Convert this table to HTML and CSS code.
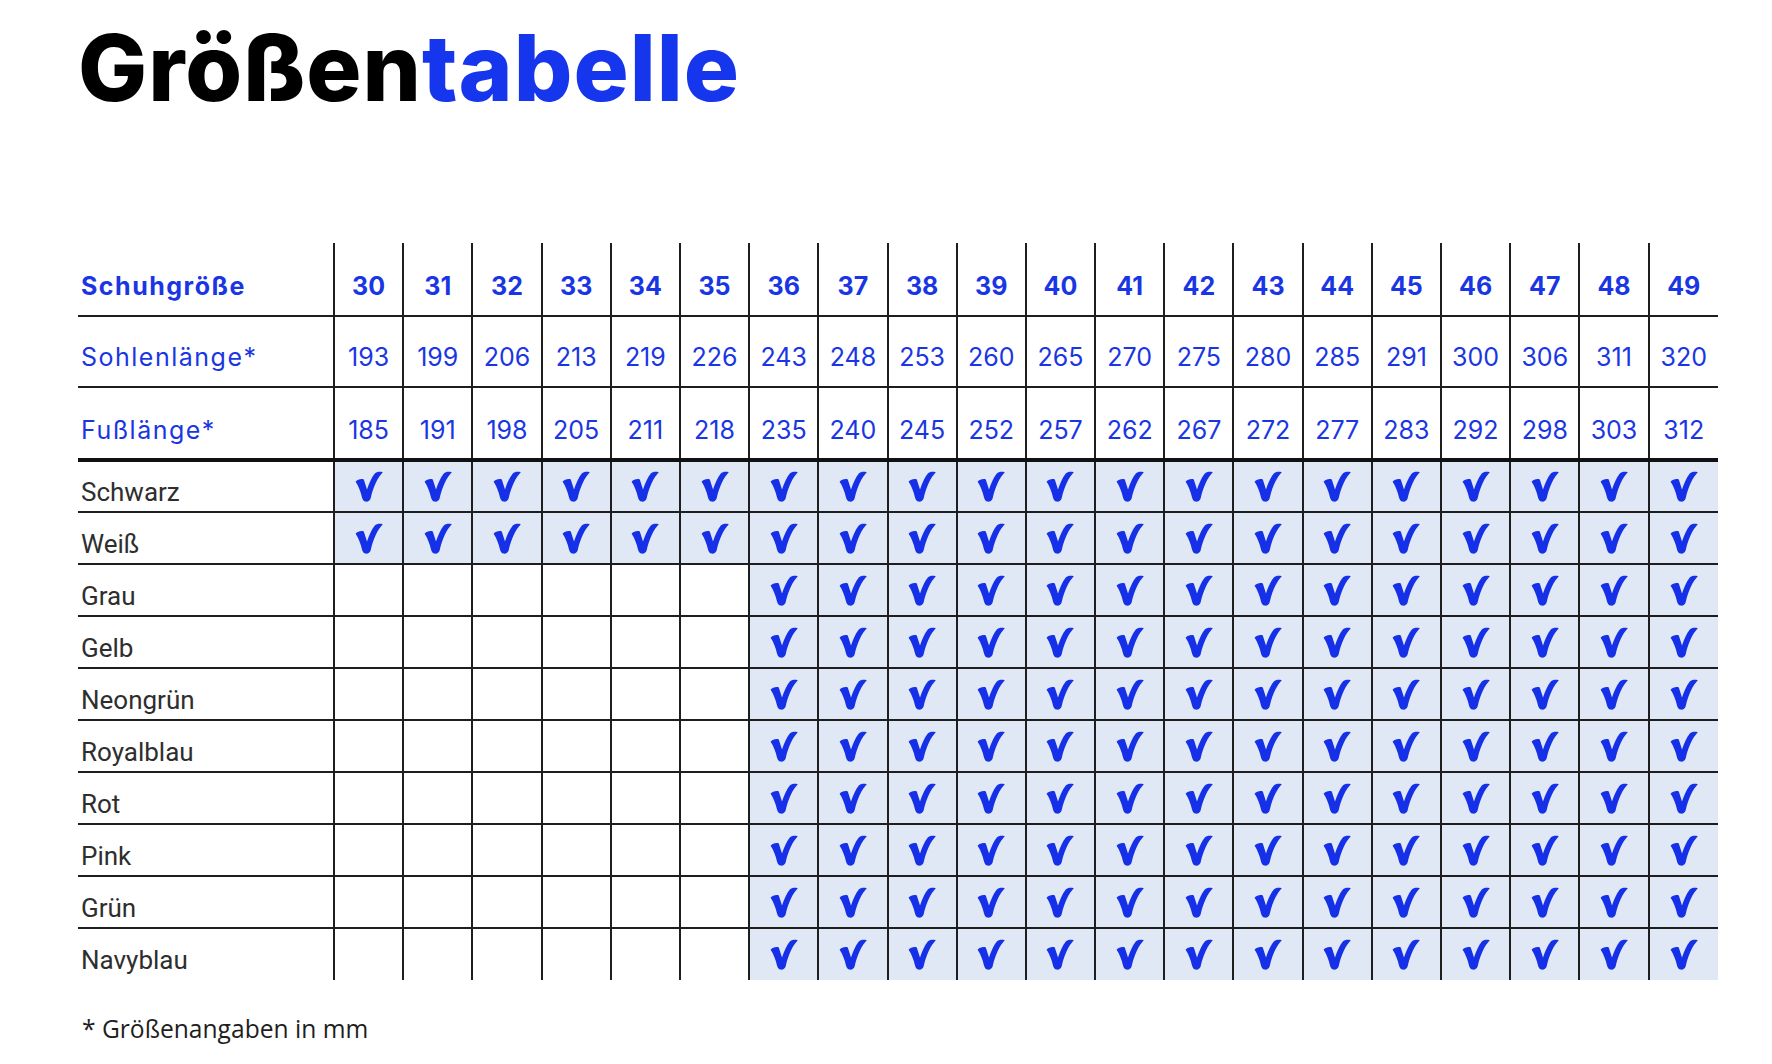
FILE: index.html
```html
<!DOCTYPE html>
<html lang="de">
<head>
<meta charset="utf-8">
<title>Größentabelle</title>
<link rel="stylesheet" href="styles.css">
</head>
<body>
<svg class="defs" width="0" height="0" aria-hidden="true">
  <defs>
    <symbol id="ck" viewBox="0 0 28 31">
      <path d="M0.6,10.8 C2.4,8.4 6.4,7.4 8.8,8.4 L12,18.5 C14,12 16.6,6.5 19.8,2.4 C21.6,0.6 25,0.3 27.8,1.2 C22.8,6.5 18.4,15 15.6,27.6 C15,30 12.6,31 10.6,30.6 C8.6,30.2 7.6,28.4 7,26.4 C5.6,20.6 3.4,14.8 0.6,10.8 Z"/>
    </symbol>
  </defs>
</svg>
<main class="page">
  <h1 class="title">Größen<span class="accent">tabelle</span></h1>
  <table class="sizes">
    <colgroup><col class="c-label"><col span="20"></colgroup>
    <tr class="r-size">
      <th class="lh">Schuhgröße</th>
      <th>30</th><th>31</th><th>32</th><th>33</th><th>34</th><th>35</th><th>36</th><th>37</th><th>38</th><th>39</th>
      <th>40</th><th>41</th><th>42</th><th>43</th><th>44</th><th>45</th><th>46</th><th>47</th><th>48</th><th>49</th>
    </tr>
    <tr class="r-sole">
      <th class="lh">Sohlenlänge*</th>
      <td>193</td><td>199</td><td>206</td><td>213</td><td>219</td><td>226</td><td>243</td><td>248</td><td>253</td><td>260</td>
      <td>265</td><td>270</td><td>275</td><td>280</td><td>285</td><td>291</td><td>300</td><td>306</td><td>311</td><td>320</td>
    </tr>
    <tr class="r-foot">
      <th class="lh">Fußlänge*</th>
      <td>185</td><td>191</td><td>198</td><td>205</td><td>211</td><td>218</td><td>235</td><td>240</td><td>245</td><td>252</td>
      <td>257</td><td>262</td><td>267</td><td>272</td><td>277</td><td>283</td><td>292</td><td>298</td><td>303</td><td>312</td>
    </tr>
    <tr class="r-color">
      <td class="cl">Schwarz</td>
      <td class="y"><svg class="ck"><use href="#ck"/></svg></td><td class="y"><svg class="ck"><use href="#ck"/></svg></td><td class="y"><svg class="ck"><use href="#ck"/></svg></td><td class="y"><svg class="ck"><use href="#ck"/></svg></td><td class="y"><svg class="ck"><use href="#ck"/></svg></td>
      <td class="y"><svg class="ck"><use href="#ck"/></svg></td><td class="y"><svg class="ck"><use href="#ck"/></svg></td><td class="y"><svg class="ck"><use href="#ck"/></svg></td><td class="y"><svg class="ck"><use href="#ck"/></svg></td><td class="y"><svg class="ck"><use href="#ck"/></svg></td>
      <td class="y"><svg class="ck"><use href="#ck"/></svg></td><td class="y"><svg class="ck"><use href="#ck"/></svg></td><td class="y"><svg class="ck"><use href="#ck"/></svg></td><td class="y"><svg class="ck"><use href="#ck"/></svg></td><td class="y"><svg class="ck"><use href="#ck"/></svg></td>
      <td class="y"><svg class="ck"><use href="#ck"/></svg></td><td class="y"><svg class="ck"><use href="#ck"/></svg></td><td class="y"><svg class="ck"><use href="#ck"/></svg></td><td class="y"><svg class="ck"><use href="#ck"/></svg></td><td class="y"><svg class="ck"><use href="#ck"/></svg></td>
    </tr>
    <tr class="r-color">
      <td class="cl">Weiß</td>
      <td class="y"><svg class="ck"><use href="#ck"/></svg></td><td class="y"><svg class="ck"><use href="#ck"/></svg></td><td class="y"><svg class="ck"><use href="#ck"/></svg></td><td class="y"><svg class="ck"><use href="#ck"/></svg></td><td class="y"><svg class="ck"><use href="#ck"/></svg></td>
      <td class="y"><svg class="ck"><use href="#ck"/></svg></td><td class="y"><svg class="ck"><use href="#ck"/></svg></td><td class="y"><svg class="ck"><use href="#ck"/></svg></td><td class="y"><svg class="ck"><use href="#ck"/></svg></td><td class="y"><svg class="ck"><use href="#ck"/></svg></td>
      <td class="y"><svg class="ck"><use href="#ck"/></svg></td><td class="y"><svg class="ck"><use href="#ck"/></svg></td><td class="y"><svg class="ck"><use href="#ck"/></svg></td><td class="y"><svg class="ck"><use href="#ck"/></svg></td><td class="y"><svg class="ck"><use href="#ck"/></svg></td>
      <td class="y"><svg class="ck"><use href="#ck"/></svg></td><td class="y"><svg class="ck"><use href="#ck"/></svg></td><td class="y"><svg class="ck"><use href="#ck"/></svg></td><td class="y"><svg class="ck"><use href="#ck"/></svg></td><td class="y"><svg class="ck"><use href="#ck"/></svg></td>
    </tr>
    <tr class="r-color">
      <td class="cl">Grau</td>
      <td></td><td></td><td></td><td></td><td></td><td></td>
      <td class="y"><svg class="ck"><use href="#ck"/></svg></td><td class="y"><svg class="ck"><use href="#ck"/></svg></td><td class="y"><svg class="ck"><use href="#ck"/></svg></td><td class="y"><svg class="ck"><use href="#ck"/></svg></td><td class="y"><svg class="ck"><use href="#ck"/></svg></td><td class="y"><svg class="ck"><use href="#ck"/></svg></td><td class="y"><svg class="ck"><use href="#ck"/></svg></td>
      <td class="y"><svg class="ck"><use href="#ck"/></svg></td><td class="y"><svg class="ck"><use href="#ck"/></svg></td><td class="y"><svg class="ck"><use href="#ck"/></svg></td><td class="y"><svg class="ck"><use href="#ck"/></svg></td><td class="y"><svg class="ck"><use href="#ck"/></svg></td><td class="y"><svg class="ck"><use href="#ck"/></svg></td><td class="y"><svg class="ck"><use href="#ck"/></svg></td>
    </tr>
    <tr class="r-color">
      <td class="cl">Gelb</td>
      <td></td><td></td><td></td><td></td><td></td><td></td>
      <td class="y"><svg class="ck"><use href="#ck"/></svg></td><td class="y"><svg class="ck"><use href="#ck"/></svg></td><td class="y"><svg class="ck"><use href="#ck"/></svg></td><td class="y"><svg class="ck"><use href="#ck"/></svg></td><td class="y"><svg class="ck"><use href="#ck"/></svg></td><td class="y"><svg class="ck"><use href="#ck"/></svg></td><td class="y"><svg class="ck"><use href="#ck"/></svg></td>
      <td class="y"><svg class="ck"><use href="#ck"/></svg></td><td class="y"><svg class="ck"><use href="#ck"/></svg></td><td class="y"><svg class="ck"><use href="#ck"/></svg></td><td class="y"><svg class="ck"><use href="#ck"/></svg></td><td class="y"><svg class="ck"><use href="#ck"/></svg></td><td class="y"><svg class="ck"><use href="#ck"/></svg></td><td class="y"><svg class="ck"><use href="#ck"/></svg></td>
    </tr>
    <tr class="r-color">
      <td class="cl">Neongrün</td>
      <td></td><td></td><td></td><td></td><td></td><td></td>
      <td class="y"><svg class="ck"><use href="#ck"/></svg></td><td class="y"><svg class="ck"><use href="#ck"/></svg></td><td class="y"><svg class="ck"><use href="#ck"/></svg></td><td class="y"><svg class="ck"><use href="#ck"/></svg></td><td class="y"><svg class="ck"><use href="#ck"/></svg></td><td class="y"><svg class="ck"><use href="#ck"/></svg></td><td class="y"><svg class="ck"><use href="#ck"/></svg></td>
      <td class="y"><svg class="ck"><use href="#ck"/></svg></td><td class="y"><svg class="ck"><use href="#ck"/></svg></td><td class="y"><svg class="ck"><use href="#ck"/></svg></td><td class="y"><svg class="ck"><use href="#ck"/></svg></td><td class="y"><svg class="ck"><use href="#ck"/></svg></td><td class="y"><svg class="ck"><use href="#ck"/></svg></td><td class="y"><svg class="ck"><use href="#ck"/></svg></td>
    </tr>
    <tr class="r-color">
      <td class="cl">Royalblau</td>
      <td></td><td></td><td></td><td></td><td></td><td></td>
      <td class="y"><svg class="ck"><use href="#ck"/></svg></td><td class="y"><svg class="ck"><use href="#ck"/></svg></td><td class="y"><svg class="ck"><use href="#ck"/></svg></td><td class="y"><svg class="ck"><use href="#ck"/></svg></td><td class="y"><svg class="ck"><use href="#ck"/></svg></td><td class="y"><svg class="ck"><use href="#ck"/></svg></td><td class="y"><svg class="ck"><use href="#ck"/></svg></td>
      <td class="y"><svg class="ck"><use href="#ck"/></svg></td><td class="y"><svg class="ck"><use href="#ck"/></svg></td><td class="y"><svg class="ck"><use href="#ck"/></svg></td><td class="y"><svg class="ck"><use href="#ck"/></svg></td><td class="y"><svg class="ck"><use href="#ck"/></svg></td><td class="y"><svg class="ck"><use href="#ck"/></svg></td><td class="y"><svg class="ck"><use href="#ck"/></svg></td>
    </tr>
    <tr class="r-color">
      <td class="cl">Rot</td>
      <td></td><td></td><td></td><td></td><td></td><td></td>
      <td class="y"><svg class="ck"><use href="#ck"/></svg></td><td class="y"><svg class="ck"><use href="#ck"/></svg></td><td class="y"><svg class="ck"><use href="#ck"/></svg></td><td class="y"><svg class="ck"><use href="#ck"/></svg></td><td class="y"><svg class="ck"><use href="#ck"/></svg></td><td class="y"><svg class="ck"><use href="#ck"/></svg></td><td class="y"><svg class="ck"><use href="#ck"/></svg></td>
      <td class="y"><svg class="ck"><use href="#ck"/></svg></td><td class="y"><svg class="ck"><use href="#ck"/></svg></td><td class="y"><svg class="ck"><use href="#ck"/></svg></td><td class="y"><svg class="ck"><use href="#ck"/></svg></td><td class="y"><svg class="ck"><use href="#ck"/></svg></td><td class="y"><svg class="ck"><use href="#ck"/></svg></td><td class="y"><svg class="ck"><use href="#ck"/></svg></td>
    </tr>
    <tr class="r-color">
      <td class="cl">Pink</td>
      <td></td><td></td><td></td><td></td><td></td><td></td>
      <td class="y"><svg class="ck"><use href="#ck"/></svg></td><td class="y"><svg class="ck"><use href="#ck"/></svg></td><td class="y"><svg class="ck"><use href="#ck"/></svg></td><td class="y"><svg class="ck"><use href="#ck"/></svg></td><td class="y"><svg class="ck"><use href="#ck"/></svg></td><td class="y"><svg class="ck"><use href="#ck"/></svg></td><td class="y"><svg class="ck"><use href="#ck"/></svg></td>
      <td class="y"><svg class="ck"><use href="#ck"/></svg></td><td class="y"><svg class="ck"><use href="#ck"/></svg></td><td class="y"><svg class="ck"><use href="#ck"/></svg></td><td class="y"><svg class="ck"><use href="#ck"/></svg></td><td class="y"><svg class="ck"><use href="#ck"/></svg></td><td class="y"><svg class="ck"><use href="#ck"/></svg></td><td class="y"><svg class="ck"><use href="#ck"/></svg></td>
    </tr>
    <tr class="r-color">
      <td class="cl">Grün</td>
      <td></td><td></td><td></td><td></td><td></td><td></td>
      <td class="y"><svg class="ck"><use href="#ck"/></svg></td><td class="y"><svg class="ck"><use href="#ck"/></svg></td><td class="y"><svg class="ck"><use href="#ck"/></svg></td><td class="y"><svg class="ck"><use href="#ck"/></svg></td><td class="y"><svg class="ck"><use href="#ck"/></svg></td><td class="y"><svg class="ck"><use href="#ck"/></svg></td><td class="y"><svg class="ck"><use href="#ck"/></svg></td>
      <td class="y"><svg class="ck"><use href="#ck"/></svg></td><td class="y"><svg class="ck"><use href="#ck"/></svg></td><td class="y"><svg class="ck"><use href="#ck"/></svg></td><td class="y"><svg class="ck"><use href="#ck"/></svg></td><td class="y"><svg class="ck"><use href="#ck"/></svg></td><td class="y"><svg class="ck"><use href="#ck"/></svg></td><td class="y"><svg class="ck"><use href="#ck"/></svg></td>
    </tr>
    <tr class="r-color">
      <td class="cl">Navyblau</td>
      <td></td><td></td><td></td><td></td><td></td><td></td>
      <td class="y"><svg class="ck"><use href="#ck"/></svg></td><td class="y"><svg class="ck"><use href="#ck"/></svg></td><td class="y"><svg class="ck"><use href="#ck"/></svg></td><td class="y"><svg class="ck"><use href="#ck"/></svg></td><td class="y"><svg class="ck"><use href="#ck"/></svg></td><td class="y"><svg class="ck"><use href="#ck"/></svg></td><td class="y"><svg class="ck"><use href="#ck"/></svg></td>
      <td class="y"><svg class="ck"><use href="#ck"/></svg></td><td class="y"><svg class="ck"><use href="#ck"/></svg></td><td class="y"><svg class="ck"><use href="#ck"/></svg></td><td class="y"><svg class="ck"><use href="#ck"/></svg></td><td class="y"><svg class="ck"><use href="#ck"/></svg></td><td class="y"><svg class="ck"><use href="#ck"/></svg></td><td class="y"><svg class="ck"><use href="#ck"/></svg></td>
    </tr>
  </table>
  <p class="note">* Größenangaben in mm</p>
</main>
</body>
</html>
```
FILE: styles.css
```css
html, body {
  margin: 0;
  background: #fff;
}

.defs {
  position: absolute;
  width: 0;
  height: 0;
  overflow: hidden;
}

.page {
  width: 1640px;
  padding: 22px 0 0 78px;
}

.title {
  margin: 0;
  font-family: Inter, "Noto Sans", sans-serif;
  font-weight: 800;
  font-size: 92px;
  line-height: 92px;
  letter-spacing: 1px;
  color: #000;
}

.accent {
  color: #1636ee;
}

.sizes {
  margin-top: 129px;
  width: 1640px;
  border-collapse: collapse;
  table-layout: fixed;
}

.c-label {
  width: 256px;
}

.sizes th,
.sizes td {
  padding: 0;
  text-align: center;
  vertical-align: middle;
  border-left: 2px solid #1e1e1e;
}

.sizes th:first-child,
.sizes td:first-child {
  border-left: none;
  text-align: left;
}

.r-size,
.r-sole,
.r-foot {
  font-family: Inter, "Noto Sans", sans-serif;
  font-size: 25px;
  color: #1a36e4;
}

.r-size { height: 73px; border-bottom: 2px solid #1e1e1e; }
.r-sole { height: 71px; border-bottom: 2px solid #1e1e1e; }
.r-foot { height: 73px; border-bottom: 4px solid #111; }

.r-size th {
  font-weight: 700;
  padding-top: 14px;
}

.r-sole th,
.r-sole td {
  font-weight: 400;
  padding-top: 11px;
}

.r-foot th,
.r-foot td {
  font-weight: 400;
  padding-top: 13px;
}

.sizes .lh {
  padding-left: 3px;
  letter-spacing: 1.5px;
}

.r-color {
  height: 52px;
  border-bottom: 2px solid #1e1e1e;
}

.r-color:last-child {
  border-bottom: none;
}

.sizes .cl {
  font-family: Roboto, "Liberation Sans", sans-serif;
  font-size: 26px;
  color: #2e2e2e;
  padding: 11px 0 0 3px;
}

.sizes .y {
  background: #dfe8f4;
}

.ck {
  display: block;
  width: 28px;
  height: 31px;
  margin: 0 auto;
  fill: #1530e6;
}

.note {
  margin: 33px 0 0 4px;
  font-family: "Open Sans", "Noto Sans", sans-serif;
  font-size: 24.6px;
  line-height: 32px;
  color: #1e1e1e;
}
```
